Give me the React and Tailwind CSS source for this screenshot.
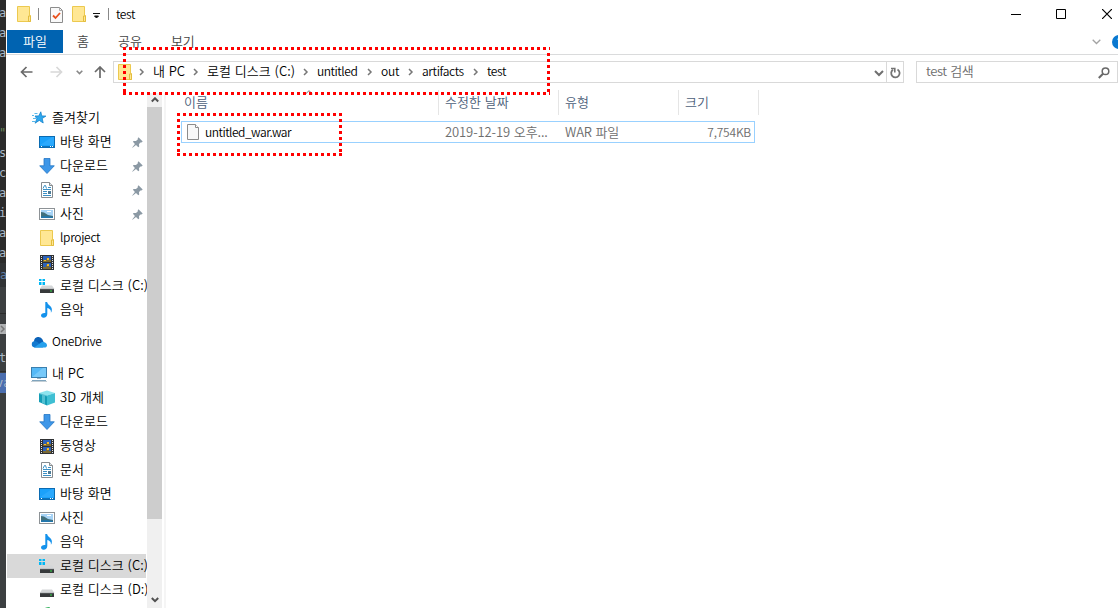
import React from 'react';

const Folder = ({ className = '' }) => (
  <svg width="16" height="18" viewBox="0 0 16 18" className={`shrink-0 ${className}`}>
    <path d="M1.5 1.5h12v9h1v6h-13z" fill="#ffe794" stroke="#ecc94f" />
    <path d="M12.5 16.5v-5.5h2v5.5z" fill="#ffe794" stroke="#e3bd3f" />
  </svg>
);

const Star = () => (
  <svg width="16" height="16" viewBox="0 0 16 16">
    <path d="M9.8 1.8l.9 4.100 4.200.200-3.700 2.400 1 4.500-3.900-2.600-4.200 2.800 1.800-4.500L4 6l3.800-.1z" fill="#2fa8ee" stroke="#1583cc" strokeWidth=".8" />
    <path d="M3.500 3.500h3M1 5.500h2M2 8.500h3M1 11.500h3" stroke="#58b9ec" />
  </svg>
);

const Desktop = () => (
  <svg width="16" height="16" viewBox="0 0 16 16">
    <rect x=".5" y="2.5" width="15" height="11" fill="#1ba1fa" stroke="#0b6bb2" />
    <path d="M1 11L13 3h2v8z" fill="#3bb2ff" opacity=".5" />
    <path d="M1 12.5h14" stroke="#0c74bd" />
    <path d="M2 12.5h1M11 12.5h1M13 12.5h1" stroke="#fff" />
  </svg>
);

const Download = () => (
  <svg width="16" height="16" viewBox="0 0 16 16">
    <path d="M5 .5h6v7.3h4.3L8 15.5.7 7.8H5z" fill="#3e97e8" stroke="#2376c5" strokeWidth=".8" />
  </svg>
);

const Document = () => (
  <svg width="16" height="16" viewBox="0 0 16 16">
    <path d="M2.500.5h8l3 3v12h-11z" fill="#fff" stroke="#868b8f" />
    <path d="M10.500.5v3h3" fill="#dfe3e6" stroke="#868b8f" />
    <path d="M4 6.500l1.500-3h1l1 3M9 5.500h3M4 7.500h8M4 9.500h4M4 11.500h4M4 13.500h8" stroke="#3a8fc4" fill="none" />
    <path d="M9 9h3v3H9z" fill="#4d7b96" />
  </svg>
);

const Picture = () => (
  <svg width="16" height="16" viewBox="0 0 16 16">
    <rect x=".5" y="2.500" width="15" height="11" fill="#fff" stroke="#8d9296" />
    <path d="M2 4h12v8H2z" fill="#a6d3f6" />
    <path d="M2 6l3 .5 4 2.500 5 1v2H2z" fill="#41707c" />
    <path d="M2 10.500l5-.5 7 1v1H2z" fill="#2277ae" />
    <path d="M8 5.500h4" stroke="#fff" />
  </svg>
);

const Video = () => (
  <svg width="16" height="16" viewBox="0 0 16 16">
    <path d="M1 1h14v15H1z" fill="#303234" />
    <path d="M2.500 2v13M13.500 2v13" stroke="#e5e5e5" strokeDasharray="1 1" />
    <path d="M4 2h8v6H4zM4 9h8v6H4z" fill="#2c62bb" />
    <path d="M4 6h3l1-2h2v2h2v2H4zM4 13h3v-2h3v2h2v2H4z" fill="#7b6a36" />
    <path d="M8 4h2v2H8zM8 10h2v2H8zM5 6h2v1H5z" fill="#f5bb24" />
  </svg>
);

const Drive = ({ windows }) => (
  <svg width="16" height="16" viewBox="0 0 16 16">
    <path d="M3 7.500h10l2.500 3.500H.8z" fill="#d4d6d8" />
    <path d="M1 11h14v4H1z" fill="#37393b" />
    <path d="M1 11.200h14" stroke="#73777a" strokeWidth=".6" />
    <path d="M11 12.500h2v1h-2z" fill="#34e04b" />
    {windows && <path d="M0 1h2.500v2H0zM3.500 1H6v2H3.500zM0 4h2.500v3H0zM3.500 4H6v3H3.500z" fill="#00b7f5" />}
  </svg>
);

const Music = () => (
  <svg width="16" height="16" viewBox="0 0 16 16">
    <path d="M6.300 0h1.800c.4 3 4.800 3.600 4.800 7.700 0 1.300-.4 2.300-1 3 .5-3-1.600-4.200-3.600-4.700V12c0 2.200-1.700 3.800-3.700 3.800-1.600 0-2.600-1-2.600-2.200 0-1.800 2-3 4.300-2.600z" fill="#1492ec" />
  </svg>
);

const Cloud = () => (
  <svg width="16" height="16" viewBox="0 0 16 16">
    <path d="M3 7a4.500 4.500 0 0 1 8.500-1.500L13 9l-9 4z" fill="#0b62b8" />
    <path d="M3.500 13.500A3.300 3.300 0 0 1 3.500 7c1 0 2 .4 2.800 1l6 5.500z" fill="#1279cf" />
    <path d="M3 13.500l7.500-5.200c2.500-.9 5.500.6 5.500 2.900 0 1.400-1 2.300-2.500 2.300z" fill="#26a0ec" />
  </svg>
);

const Computer = () => (
  <svg width="16" height="16" viewBox="0 0 16 16">
    <rect x=".5" y="1.500" width="15" height="10" fill="#56b9f6" stroke="#3a7fae" />
    <path d="M1 11L12 2h3v9z" fill="#8ed3fc" opacity=".6" />
    <path d="M6 12h4v1H6z" fill="#9fb2c0" />
    <path d="M1 14.500h14" stroke="#7fa4bd" />
    <path d="M0 15.500h16" stroke="#c3ced5" />
  </svg>
);

const Cube = () => (
  <svg width="16" height="16" viewBox="0 0 16 16">
    <path d="M0 3l8-2.500L16 3 8 5.500z" fill="#8de4ee" />
    <path d="M0 3l8 2.500v10L0 12z" fill="#159db6" />
    <path d="M8 5.500L16 3v9.500l-8 3z" fill="#3fbfd3" />
    <path d="M3 4l3 .9v9L3 13zM0 3l8 2.500v1L0 4z" fill="#9feaf3" opacity=".45" />
  </svg>
);

const Pin = () => (
  <svg width="11" height="11" viewBox="0 0 11 11" className="shrink-0">
    <path d="M6.500.3l4.200 4.200-1.200.9-.6-.2-1.900 1.900.2 2.400-.9.700L4 8.100.500 10.800l-.3-.3L2.900 7 .9 4.800l.7-.9 2.400.2 1.900-1.900-.2-.7z" fill="#8b99a4" />
  </svg>
);

const Chevron = () => (
  <svg width="6" height="8" viewBox="0 0 6 8" className="shrink-0">
    <path d="M1 1l3 3-3 3" fill="none" stroke="#777" strokeWidth="1.500" />
  </svg>
);

const favorites = [
  { label: '바탕 화면', icon: <Desktop />, pinned: true },
  { label: '다운로드', icon: <Download />, pinned: true },
  { label: '문서', icon: <Document />, pinned: true },
  { label: '사진', icon: <Picture />, pinned: true },
  { label: 'lproject', icon: <Folder />, text: 'text-[12px] tracking-[-0.3px]' },
  { label: '동영상', icon: <Video /> },
  { label: '로컬 디스크 (C:)', icon: <Drive windows /> },
  { label: '음악', icon: <Music /> },
];

const computer = [
  { label: '3D 개체', icon: <Cube /> },
  { label: '다운로드', icon: <Download /> },
  { label: '동영상', icon: <Video /> },
  { label: '문서', icon: <Document /> },
  { label: '바탕 화면', icon: <Desktop /> },
  { label: '사진', icon: <Picture /> },
  { label: '음악', icon: <Music /> },
  { label: '로컬 디스크 (C:)', icon: <Drive windows />, selected: true },
  { label: '로컬 디스크 (D:)', icon: <Drive /> },
];

const path = [
  { label: '내 PC', width: 'w-[54px]', text: 'tracking-[-0.1px]' },
  { label: '로컬 디스크 (C:)', width: 'w-[110px]', text: '' },
  { label: 'untitled', width: 'w-[64px]', text: 'text-[12px] tracking-[-0.45px]' },
  { label: 'out', width: 'w-[41px]', text: 'text-[12px] tracking-[-0.2px]' },
  { label: 'artifacts', width: 'w-[65px]', text: 'text-[12px] tracking-[-0.35px]' },
  { label: 'test', width: 'w-[40px]', text: 'text-[12px] tracking-[-0.4px]' },
];

const codeLines = ['a', 'a', 'a', '', '', '', '"', 's', 'c', 'a', 'i', 'a', 'a'];

const NavItem = ({ label, icon, pinned, selected, text = '' }) => (
  <div className={`ml-px flex h-6 w-[139px] shrink-0 items-center pl-8 ${selected ? 'bg-[#d9d9d9]' : ''}`}>
    <span className="flex w-[21px] shrink-0">{icon}</span>
    <span className={`pb-[2px] whitespace-nowrap ${text}`}>{label}</span>
    {pinned && (
      <span className="mr-[3px] ml-auto">
        <Pin />
      </span>
    )}
  </div>
);

const NavRoot = ({ label, icon, text = '' }) => (
  <div className="flex h-6 shrink-0 items-center pl-[25px]">
    <span className="flex w-[21px] shrink-0">{icon}</span>
    <span className={`pb-[2px] whitespace-nowrap ${text}`}>{label}</span>
  </div>
);

const EditorStrip = () => (
  <div className="flex w-1.5 shrink-0 flex-col overflow-hidden bg-[#2b2b2b] pt-[3px] font-['DejaVu_Sans_Mono',monospace] text-[12px] leading-5 font-normal text-[#a9b7c6]">
    {codeLines.map((line, i) => (
      <div key={i} className={`-ml-px h-5 shrink-0 ${line === '"' ? 'text-[#6a8759]' : ''}`}>{line}</div>
    ))}
    <div className="h-6 shrink-0 bg-[#313335] leading-6 text-[#5f7ea8]">a</div>
    <div className="flex flex-1 flex-col bg-[#3c3f41]">
      <div className="h-[27px] shrink-0 border-b border-[#2b2b2b]" />
      <div className="mt-[10px] flex h-[10px] shrink-0 items-center bg-[#afb1b3]">
        <Chevron />
      </div>
      <div className="mt-[14px] -ml-px h-[24px] shrink-0 border-b border-[#2b2b2b]">t</div>
      <div className="mt-px h-5 shrink-0 bg-[#4b6eaf]"><span className="-ml-1">va</span></div>
    </div>
  </div>
);

const TitleBar = () => (
  <div className="flex h-[30px] shrink-0 items-center pb-[2px]">
    <Folder className="ml-[10px]" />
    <span className="ml-[6px] h-3 w-px bg-[#888]" />
    <svg width="13" height="16" viewBox="0 0 13 16" className="mt-[2px] ml-[11px]">
      <path d="M.5.5h9l3 3v12H.5z" fill="#f9f9f9" stroke="#8c8c8c" />
      <path d="M9.500.5v3h3" fill="none" stroke="#aaa" />
      <path d="M3 8.500l2.500 2.500 4.500-5" fill="none" stroke="#e8501c" strokeWidth="1.800" />
    </svg>
    <Folder className="ml-[8px]" />
    <svg width="7" height="6" viewBox="0 0 7 6" className="mt-[4px] ml-[6px]">
      <path d="M0 .5h7M1.500 3h4L3.500 5z" stroke="#111" strokeWidth="1" fill="#111" />
    </svg>
    <span className="ml-[8px] h-3 w-px bg-[#888]" />
    <span className="ml-[7px] text-[12px] tracking-[-0.4px]">test</span>
    <svg width="10" height="10" viewBox="0 0 10 10" className="mt-[2px] mr-[35px] ml-auto">
      <path d="M0 4.500h10" stroke="#000" />
    </svg>
    <svg width="10" height="10" viewBox="0 0 10 10" className="mr-[36px]">
      <path d="M.5.5h9v9h-9z" fill="none" stroke="#000" />
    </svg>
    <svg width="10" height="10" viewBox="0 0 10 10" className="mr-[6px]">
      <path d="M0 0l10 10M10 0L0 10" stroke="#000" strokeWidth="1.200" />
    </svg>
  </div>
);

const Ribbon = () => (
  <div className="flex h-[25px] shrink-0 items-start overflow-hidden border-b border-[#dadbdc] text-[#444]">
    <div className="ml-px flex h-[23px] w-14 items-center justify-center bg-[#0063b1] pb-[2px] text-white">파일</div>
    <span className="mt-px ml-[14px]">홈</span>
    <span className="mt-px ml-[29px]">공유</span>
    <span className="mt-px ml-[29px]">보기</span>
    <svg width="9" height="6" viewBox="0 0 9 6" className="mt-[9px] ml-auto">
      <path d="M.7.7L4.500 4.500 8.300.7" fill="none" stroke="#a3a3a3" strokeWidth="1.300" />
    </svg>
    <div className="mt-[5px] -mr-[8px] ml-[11px] flex size-[14px] shrink-0 items-center justify-center rounded-full bg-[#0a78d0] text-[10px] text-white">?</div>
  </div>
);

const AddressRow = () => (
  <div className="flex h-[38px] shrink-0 pt-[6px]">
    <div className="flex h-[22px] w-[107px] items-center">
      <svg width="13" height="12" viewBox="0 0 13 12" className="ml-[14px]">
        <path d="M6.500 1L1.500 6l5 5M1.500 6H12.500" fill="none" stroke="#6a6a6a" strokeWidth="1.700" />
      </svg>
      <svg width="13" height="12" viewBox="0 0 13 12" className="ml-[17px]">
        <path d="M6.500 1l5 5-5 5M11.500 6H.5" fill="none" stroke="#d8d8d8" strokeWidth="1.700" />
      </svg>
      <svg width="7" height="5" viewBox="0 0 7 5" className="ml-[13px]">
        <path d="M.7.7l2.800 2.800L6.300.7" fill="none" stroke="#888" strokeWidth="1.600" />
      </svg>
      <svg width="12" height="12" viewBox="0 0 12 12" className="ml-[11px]">
        <path d="M1 6l5-5 5 5M6 1v11" fill="none" stroke="#6a6a6a" strokeWidth="1.700" />
      </svg>
    </div>
    <div className="flex h-[22px] w-[791px] shrink-0 items-center border border-[#d9d9d9]">
      <Folder className="-mt-px ml-[3px]" />
      <span className="w-[6px]" />
      {path.map((part) => (
        <div key={part.label} className={`flex shrink-0 items-center whitespace-nowrap ${part.width}`}>
          <Chevron />
          <span className={`ml-[8px] pb-[2px] ${part.text}`}>{part.label}</span>
        </div>
      ))}
      <svg width="10" height="7" viewBox="0 0 10 7" className="mt-[2px] mr-[2px] ml-auto">
        <path d="M1 1l4 4 4-4" fill="none" stroke="#6f6f6f" strokeWidth="2" />
      </svg>
      <div className="flex h-5 w-[17px] items-center justify-center border-l border-[#d9d9d9]">
        <svg width="11" height="12" viewBox="0 0 11 12" className="mt-px ml-px">
          <path d="M7.500 2.500A4.200 4.200 0 1 1 3 2.700" fill="none" stroke="#737373" strokeWidth="1.800" />
          <path d="M1 1.500h3.800v4" fill="none" stroke="#737373" strokeWidth="1.600" />
        </svg>
      </div>
    </div>
    <div className="ml-3 flex h-[22px] flex-1 items-center border border-[#d9d9d9] pl-[9px] text-[#6d6d6d]">
      <span className="pb-[2px] tracking-[-0.4px]">test 검색</span>
      <svg width="12" height="12" viewBox="0 0 12 12" className="mt-px mr-[7px] ml-auto">
        <circle cx="7.500" cy="4.300" r="3.300" fill="none" stroke="#686868" strokeWidth="1.500" />
        <path d="M5 6.800L.8 11" stroke="#686868" strokeWidth="2" />
      </svg>
    </div>
  </div>
);

const Sidebar = () => (
  <div className="flex w-[141px] shrink-0 flex-col overflow-hidden pt-[13px]">
    <NavRoot label="즐겨찾기" icon={<Star />} />
    {favorites.map((item) => (
      <NavItem key={item.label} {...item} />
    ))}
    <div className="h-2 shrink-0" />
    <NavRoot label="OneDrive" icon={<Cloud />} text="text-[12px] tracking-[-0.2px]" />
    <div className="h-2 shrink-0" />
    <NavRoot label="내 PC" icon={<Computer />} />
    {computer.map((item) => (
      <NavItem key={item.label} {...item} />
    ))}
    <svg width="16" height="6" viewBox="0 0 16 6" className="mt-[4px] ml-[33px] shrink-0">
      <path d="M3 5c2-3 4-4 8-4L9 5z" fill="#42b567" />
    </svg>
  </div>
);

const Scrollbar = () => (
  <div className="flex w-[15px] shrink-0 flex-col bg-[#f0f0f0]">
    <div className="flex h-[14px] items-center justify-center">
      <svg width="8" height="6" viewBox="0 0 8 6">
        <path d="M.8 4.500L4 1.300l3.200 3.200" fill="none" stroke="#505050" strokeWidth="2" />
      </svg>
    </div>
    <div className="h-[412px] bg-[#cdcdcd]" />
    <div className="mt-auto flex h-[17px] items-center justify-center">
      <svg width="8" height="6" viewBox="0 0 8 6">
        <path d="M.8 1L4 4.200 7.200 1" fill="none" stroke="#505050" strokeWidth="2" />
      </svg>
    </div>
  </div>
);

const FileList = () => (
  <div className="ml-[2px] flex-1 border-l-2 border-[#f5f5f5]">
    <div className="relative -mt-[3px] flex h-[25px] text-[#4c607a]">
      <svg width="8" height="5" viewBox="0 0 8 5" className="absolute top-0 left-[139px]">
        <path d="M.5 4L4 .7 7.500 4" fill="none" stroke="#777" />
      </svg>
      <div className="flex w-[273px] items-center border-r border-[#e5e5e5] pb-[2px] pl-[18px]">이름</div>
      <div className="flex w-[120px] items-center border-r border-[#e5e5e5] pb-[2px] pl-[6px]">수정한 날짜</div>
      <div className="flex w-[120px] items-center border-r border-[#e5e5e5] pb-[2px] pl-[6px]">유형</div>
      <div className="flex w-[80px] items-center border-r border-[#e5e5e5] pb-[2px] pl-[6px]">크기</div>
    </div>
    <div className="mt-[6px] ml-[15px] flex h-[22px] w-[574px] items-center border border-[#99d1ff] text-[#6d6d6d]">
      <svg width="12" height="16" viewBox="0 0 12 16" className="-mt-px ml-[5px]">
        <path d="M.5.5h8l3 3v12H.5z" fill="#f9f9f9" stroke="#8c8c8c" />
        <path d="M8.500.5v3h3" fill="#fff" stroke="#8c8c8c" />
      </svg>
      <span className="ml-[6px] w-[240px] pb-px text-[12px] tracking-[-0.5px] text-black">untitled_war.war</span>
      <span className="w-[120px] pb-px tracking-[-0.1px] whitespace-nowrap">2019-12-19 오후...</span>
      <span className="pb-px tracking-[-0.2px]">WAR 파일</span>
      <span className="mr-[3px] ml-auto pb-px text-[12px] tracking-[-0.2px]">7,754KB</span>
    </div>
  </div>
);

// dotted callouts drawn over the window
const Callouts = () => (
  <svg width="1118" height="608" className="pointer-events-none absolute inset-0" fill="none" stroke="#ff0000" strokeWidth="3" strokeDasharray="3 3">
    <path d="M123 48.500H550M123 93.500H550M124.500 53V92M548.500 53V92" />
    <path d="M177 114.500H342M177 154.500H342M178.500 119V153M340.500 119V153" />
  </svg>
);

export default function App() {
  return (
    <div className="relative flex h-[608px] w-[1118px] overflow-hidden bg-white font-['Noto_Sans_CJK_KR',sans-serif] text-[13px] leading-5 font-[350] text-black [word-spacing:1px]">
      <EditorStrip />
      <div className="flex min-w-0 flex-1 flex-col">
        <TitleBar />
        <Ribbon />
        <AddressRow />
        <div className="flex min-h-0 flex-1">
          <Sidebar />
          <Scrollbar />
          <FileList />
        </div>
      </div>
      <Callouts />
    </div>
  );
}
